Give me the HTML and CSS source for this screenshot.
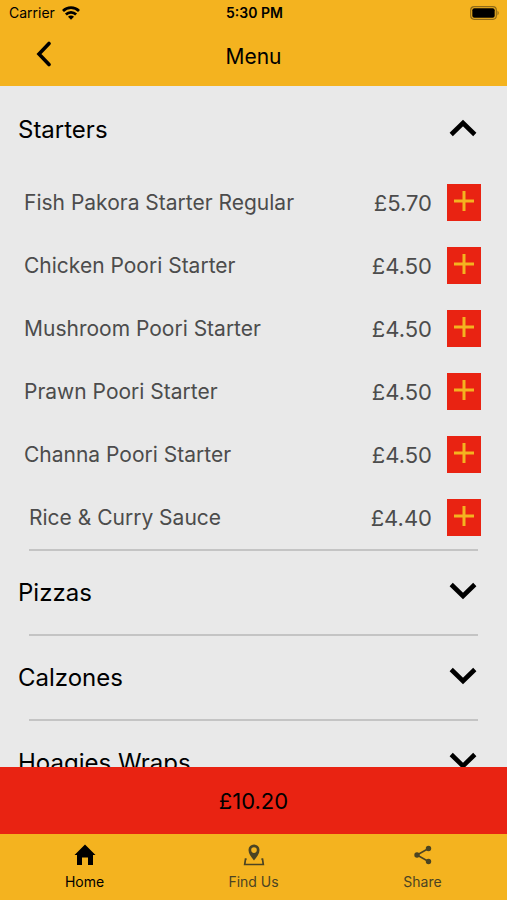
FILE: index.html
```html
<!DOCTYPE html>
<html lang="en">
<head>
<meta charset="utf-8">
<meta name="viewport" content="width=device-width, initial-scale=1">
<title>Menu</title>
<link rel="stylesheet" href="styles.css">
</head>
<body>
<header class="top">
  <div class="status">
    <span class="carrier">Carrier
      <svg width="18" height="14" viewBox="0 0 18 14" aria-hidden="true"><g fill="none" stroke="#000" stroke-width="2.700"><path d="M1 5a11.300 11.300 0 0 1 16 0"/><path d="M3.900 8.500a7.200 7.200 0 0 1 10.200 0"/></g><path d="M9 13.800L6 10.800a4.200 4.200 0 0 1 6 0z"/></svg>
    </span>
    <strong class="clock">5:30 PM</strong>
    <svg class="battery" width="30" height="14" viewBox="0 0 30 14" aria-hidden="true"><rect x=".7" y=".7" width="25.600" height="12.600" rx="3.500" fill="none" stroke="#8f6b18" stroke-width="1.200"/><rect x="2.300" y="2.300" width="22.400" height="9.400" rx="2"/><path d="M27.500 4.500q2.500 2.500 0 5z" fill="#8f6b18"/></svg>
  </div>
  <div class="bar">
    <button class="back" type="button" aria-label="Back"><svg width="16" height="26" viewBox="0 0 16 26"><path d="M13 2.500L3 13l10 10.500" fill="none" stroke="#000" stroke-width="3.600" stroke-linecap="round"/></svg></button>
    <h1>Menu</h1>
  </div>
</header>
<main class="menu">
  <section>
    <h2><button class="category" type="button" aria-expanded="true">Starters<svg width="28" height="18" viewBox="0 0 28 18"><path d="M2.200 15.500L14 4l11.800 11.500" fill="none" stroke="#000" stroke-width="4.600"/></svg></button></h2>
    <ul class="items">
      <li><span class="name">Fish Pakora Starter Regular</span><span class="price">£5.70</span><button class="add" type="button" aria-label="Add Fish Pakora Starter Regular"><svg width="20" height="20" viewBox="0 0 20 20"><path d="M10 0v20M0 10h20"/></svg></button></li>
      <li><span class="name">Chicken Poori Starter</span><span class="price">£4.50</span><button class="add" type="button" aria-label="Add Chicken Poori Starter"><svg width="20" height="20" viewBox="0 0 20 20"><path d="M10 0v20M0 10h20"/></svg></button></li>
      <li><span class="name">Mushroom Poori Starter</span><span class="price">£4.50</span><button class="add" type="button" aria-label="Add Mushroom Poori Starter"><svg width="20" height="20" viewBox="0 0 20 20"><path d="M10 0v20M0 10h20"/></svg></button></li>
      <li><span class="name">Prawn Poori Starter</span><span class="price">£4.50</span><button class="add" type="button" aria-label="Add Prawn Poori Starter"><svg width="20" height="20" viewBox="0 0 20 20"><path d="M10 0v20M0 10h20"/></svg></button></li>
      <li><span class="name">Channa Poori Starter</span><span class="price">£4.50</span><button class="add" type="button" aria-label="Add Channa Poori Starter"><svg width="20" height="20" viewBox="0 0 20 20"><path d="M10 0v20M0 10h20"/></svg></button></li>
      <li class="last"><span class="name">Rice &amp; Curry Sauce</span><span class="price">£4.40</span><button class="add" type="button" aria-label="Add Rice &amp; Curry Sauce"><svg width="20" height="20" viewBox="0 0 20 20"><path d="M10 0v20M0 10h20"/></svg></button></li>
    </ul>
    <hr>
  </section>
  <section>
    <h2><button class="category" type="button" aria-expanded="false">Pizzas<svg width="28" height="18" viewBox="0 0 28 18"><path d="M2.200 2.500L14 14l11.800-11.500" fill="none" stroke="#000" stroke-width="4.600"/></svg></button></h2>
    <hr>
  </section>
  <section>
    <h2><button class="category" type="button" aria-expanded="false">Calzones<svg width="28" height="18" viewBox="0 0 28 18"><path d="M2.200 2.500L14 14l11.800-11.500" fill="none" stroke="#000" stroke-width="4.600"/></svg></button></h2>
    <hr>
  </section>
  <section>
    <h2><button class="category" type="button" aria-expanded="false">Hoagies Wraps<svg width="28" height="18" viewBox="0 0 28 18"><path d="M2.200 2.500L14 14l11.800-11.500" fill="none" stroke="#000" stroke-width="4.600"/></svg></button></h2>
  </section>
</main>
<button class="total" type="button">£10.20</button>
<nav class="tabs">
  <a class="active" href="#home" aria-current="page"><svg width="22" height="22" viewBox="0 0 22 22"><path d="M11 0.500L21.500 11H19v10h-5v-7.500H8V21H3V11H.5z" fill="currentColor"/></svg>Home</a>
  <a href="#find"><svg width="22" height="22" viewBox="0 0 22 22"><path d="M11 .5a5.500 5.500 0 0 0-5.500 5.500c0 3.800 2.500 6.500 5.500 10.500 3-4 5.500-6.700 5.500-10.500A5.500 5.500 0 0 0 11 .5zm0 2.800a2.800 2.800 0 1 1 0 5.600 2.800 2.800 0 0 1 0-5.600z" fill="currentColor" fill-rule="evenodd"/><path d="M3.600 15.200H2.500L1.700 20.500h18.600l-.8-5.300h-1.100" fill="none" stroke="currentColor" stroke-width="1.700"/></svg>Find Us</a>
  <a href="#share"><svg width="22" height="22" viewBox="0 0 22 22"><path d="M16.500 4.500L5 11l11.500 6.500" fill="none" stroke="currentColor" stroke-width="1.600"/><g fill="currentColor"><circle cx="16.500" cy="4.500" r="2.700"/><circle cx="5" cy="11" r="2.700"/><circle cx="16.500" cy="17.500" r="2.700"/></g></svg>Share</a>
</nav>
</body>
</html>
```
FILE: styles.css
```css
* { box-sizing: border-box; margin: 0; padding: 0; }
body {
  display: flex;
  flex-direction: column;
  height: 100vh;
  background: #e9e9e9;
  color: #000;
  font-family: Inter, "Liberation Sans", sans-serif;
}
button { font: inherit; color: inherit; background: none; border: 0; cursor: pointer; }
svg { display: block; flex: none; }

.top { flex: none; background: #f4b31f; }
.status {
  display: grid;
  grid-template-columns: 1fr auto 1fr;
  align-items: center;
  padding: 4px 7px 4px 9px;
  font-size: 14px;
  line-height: 18px;
}
.carrier { display: flex; align-items: center; gap: 7px; }
.clock { font-weight: 600; }
.battery { justify-self: end; }
.bar {
  display: grid;
  grid-template-columns: 1fr auto 1fr;
  align-items: center;
  height: 60px;
  padding: 0 32px;
}
.back { justify-self: start; padding: 0 4px 4px; }
h1 { font-size: 21px; font-weight: 400; }

.menu { flex: 1; min-height: 0; padding-top: 2px; overflow: hidden; }
h2 { font-size: 24px; font-weight: 400; }
.category {
  display: flex;
  justify-content: space-between;
  align-items: center;
  width: 100%;
  height: 83px;
  padding: 0 30px 0 18px;
}
.category svg { margin-bottom: 4px; }
hr { height: 2px; margin: 0 29px; border: 0; background: #c4c4c4; }
.items { list-style: none; color: #4c4c4c; font-size: 21px; }
.items li {
  display: flex;
  align-items: center;
  height: 63px;
  padding: 0 26px 0 24px;
}
.items .last { padding-left: 29px; }
.name { flex: 1; }
.price { font-size: 22px; }
.add {
  display: grid;
  place-items: center;
  width: 34px;
  height: 37px;
  margin-left: 15px;
  padding-bottom: 3px;
  background: #e92312;
}
.add svg { fill: none; stroke: #f4b31f; stroke-width: 3; }

.total { flex: none; height: 67px; background: #e92312; font-size: 22px; }
.tabs {
  flex: none;
  display: grid;
  grid-template-columns: repeat(3, 1fr);
  height: 66px;
  background: #f4b31f;
}
.tabs a {
  display: flex;
  flex-direction: column;
  align-items: center;
  gap: 7px;
  padding-top: 10px;
  color: #4b4423;
  font-size: 14px;
  line-height: 18px;
  text-decoration: none;
}
.tabs .active { color: #000; }
```
